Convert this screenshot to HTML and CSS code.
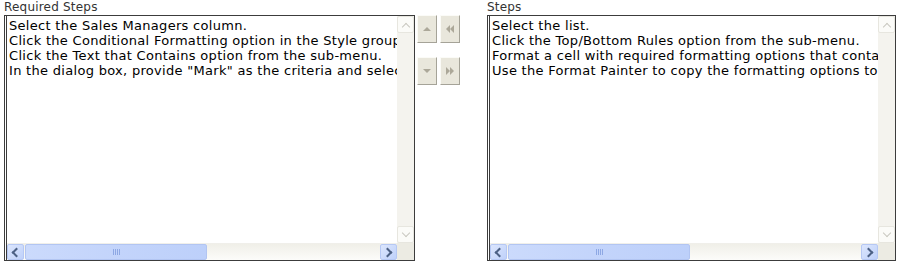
FILE: index.html
```html
<!DOCTYPE html>
<html lang="en">
<head>
    <meta charset="UTF-8">
    <title>Steps</title>
    <link rel="stylesheet" href="styles.css">
</head>
<body>
    <div class="picker">
        <div class="panel panel-left">
            <div class="label">Required Steps</div>
            <div class="listbox">
                <div class="items">
                    <div>Select the Sales Managers column.</div>
                    <div>Click the Conditional Formatting option in the Style group on the Home tab.</div>
                    <div>Click the Text that Contains option from the sub-menu.</div>
                    <div>In the dialog box, provide "Mark" as the criteria and select the formatting.</div>
                </div>
                <div class="vscroll">
                    <div class="vbtn"><span class="chev up"></span></div>
                    <div class="vtrack"></div>
                    <div class="vbtn"><span class="chev down"></span></div>
                </div>
                <div class="hscroll">
                    <div class="hbtn"><span class="chev left"></span></div>
                    <div class="htrack"><div class="thumb"><span class="grip"></span></div></div>
                    <div class="hbtn"><span class="chev right"></span></div>
                </div>
                <div class="corner"></div>
            </div>
        </div>

        <div class="movers">
            <div class="mover-row">
                <div class="mover"><span class="tri tri-up"></span></div>
                <div class="mover"><span class="dbl dbl-left"></span></div>
            </div>
            <div class="mover-row">
                <div class="mover"><span class="tri tri-down"></span></div>
                <div class="mover"><span class="dbl dbl-right"></span></div>
            </div>
        </div>

        <div class="panel panel-right">
            <div class="label">Steps</div>
            <div class="listbox">
                <div class="items">
                    <div>Select the list.</div>
                    <div>Click the Top/Bottom Rules option from the sub-menu.</div>
                    <div>Format a cell with required formatting options that contains the text.</div>
                    <div>Use the Format Painter to copy the formatting options to other cells.</div>
                </div>
                <div class="vscroll">
                    <div class="vbtn"><span class="chev up"></span></div>
                    <div class="vtrack"></div>
                    <div class="vbtn"><span class="chev down"></span></div>
                </div>
                <div class="hscroll">
                    <div class="hbtn"><span class="chev left"></span></div>
                    <div class="htrack"><div class="thumb"><span class="grip"></span></div></div>
                    <div class="hbtn"><span class="chev right"></span></div>
                </div>
                <div class="corner"></div>
            </div>
        </div>
    </div>
</body>
</html>
```

FILE: styles.css
```css
body {
    margin: 0;
    padding: 0;
    background: #ffffff;
    font-family: 'DejaVu Sans', Verdana, sans-serif;
    font-size: 12px;
    color: #000;
}
.picker {
    display: flex;
    align-items: flex-start;
    padding-left: 4px;
}
.panel-left { width: 411px; }
.panel-right { width: 409px; margin-left: 27px; }
.label {
    height: 15px;
    line-height: 14px;
    color: #333;
    letter-spacing: 0.2px;
    white-space: nowrap;
}
.listbox {
    height: 244px;
    border: 1px solid #3c3c3c;
    border-left: 3px double #3c3c3c;
    display: grid;
    grid-template-columns: 1fr 17px;
    grid-template-rows: 1fr 17px;
}
.items {
    overflow: hidden;
    white-space: nowrap;
    padding: 2px 0 0 2px;
    font-size: 13px;
    letter-spacing: 0.3px;
    line-height: 15px;
}
.vscroll {
    display: flex;
    flex-direction: column;
    background: #f4f3ee;
}
.vtrack { flex: 1; }
.vbtn {
    height: 15px;
    border: 1px solid #e7e6df;
    border-radius: 2px;
    background: #fbfbf8;
    display: flex;
    align-items: center;
    justify-content: center;
}
.hscroll {
    display: flex;
    background: linear-gradient(#f0efe8, #fcfcfa);
    border-top: 1px solid #f0efea;
}
.htrack { flex: 1; padding: 0 1px; }
.hbtn {
    width: 15px;
    border: 1px solid #b6c8f4;
    border-radius: 2px;
    background: linear-gradient(135deg, #dce6fd, #bfd1fa);
    display: flex;
    align-items: center;
    justify-content: center;
}
.thumb {
    width: 180px;
    height: 14px;
    border: 1px solid #b2c5f2;
    border-radius: 2px;
    background: linear-gradient(90deg, #cbdafc, #c3d4fb 50%, #bdd0fa);
    display: flex;
    align-items: center;
    justify-content: center;
}
.grip {
    width: 7px;
    height: 6px;
    background: repeating-linear-gradient(90deg, #8ea8e4 0 1px, transparent 1px 2px);
}
.corner { background: #ecebe3; }
.chev {
    width: 5px;
    height: 5px;
    border: solid #4d6185;
    border-width: 2px 2px 0 0;
}
.chev.left { transform: translateX(1px) rotate(-135deg); }
.chev.right { transform: translateX(-1px) rotate(45deg); }
.chev.up { border-color: #c9c8c0; border-width: 1px 1px 0 0; transform: translateY(2px) rotate(-45deg); }
.chev.down { border-color: #c9c8c0; border-width: 1px 1px 0 0; transform: translateY(-2px) rotate(135deg); }
.movers {
    display: flex;
    flex-direction: column;
    gap: 14px;
    margin-left: 2px;
    padding-top: 15px;
}
.mover-row {
    display: flex;
    gap: 3px;
}
.mover {
    width: 18px;
    height: 26px;
    background: #e9e7dc;
    border: 1px solid;
    border-color: #fbfbf7 #a5a398 #a5a398 #fbfbf7;
    display: flex;
    align-items: center;
    justify-content: center;
}
.tri {
    width: 0;
    height: 0;
    border-left: 4px solid transparent;
    border-right: 4px solid transparent;
}
.tri-up { border-bottom: 4px solid #aca899; }
.tri-down { border-top: 4px solid #aca899; }
.dbl {
    position: relative;
    width: 8px;
    height: 8px;
}
.dbl::before, .dbl::after {
    content: "";
    position: absolute;
    top: 0;
    border-top: 4px solid transparent;
    border-bottom: 4px solid transparent;
}
.dbl-left::before { left: 0; border-right: 4px solid #aca899; }
.dbl-left::after { left: 4px; border-right: 4px solid #aca899; }
.dbl-right::before { left: 0; border-left: 4px solid #aca899; }
.dbl-right::after { left: 4px; border-left: 4px solid #aca899; }
```
